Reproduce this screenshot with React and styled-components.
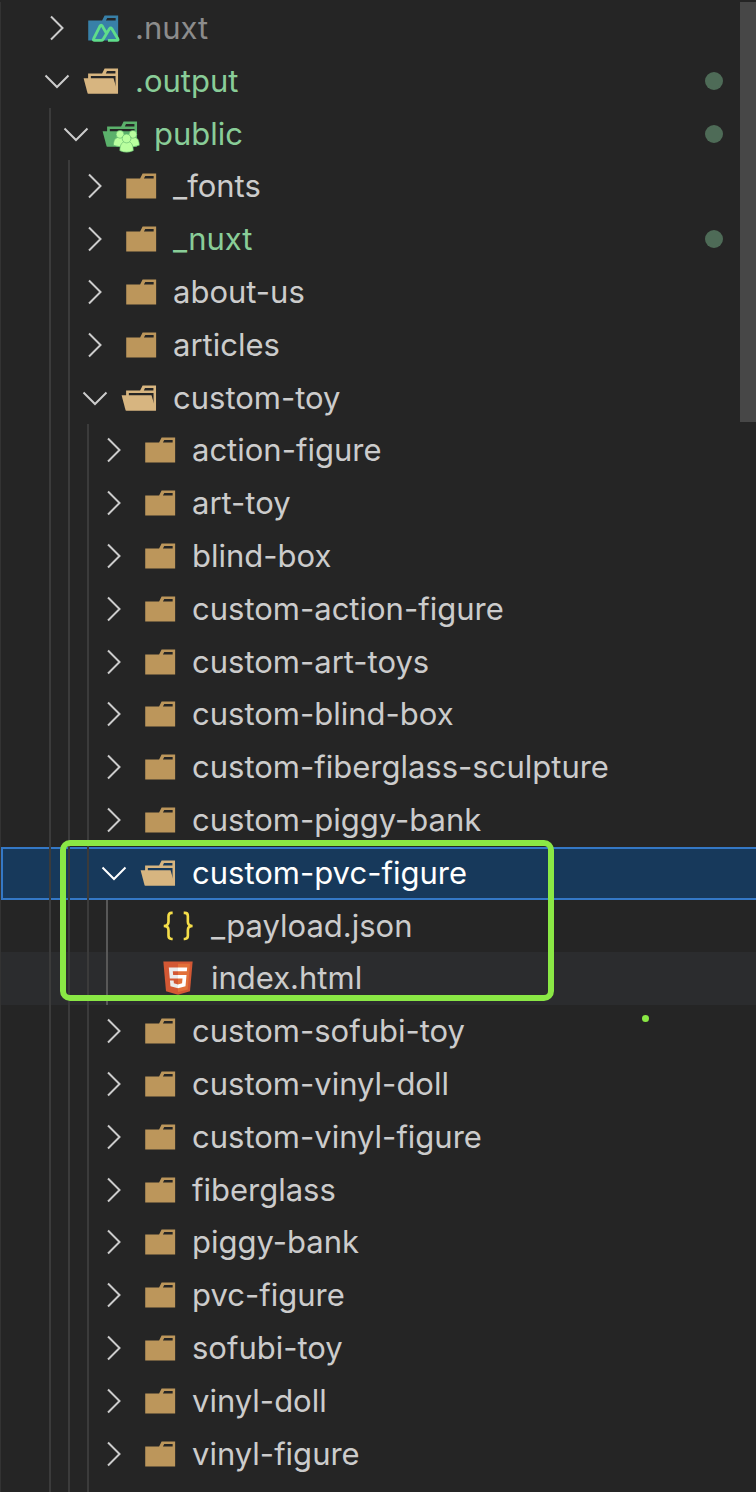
import React from 'react';
import styled, { createGlobalStyle } from 'styled-components';

const GlobalStyle = createGlobalStyle`
  body {
    margin: 0;
    background-color: #252525;
  }
`;

const Explorer = styled.main`
  display: flex;
  position: relative;
  min-height: 100vh;
  box-sizing: border-box;
  padding-top: 2px;
  overflow: hidden;
  background-color: #252525;
  font-family: Inter, 'Liberation Sans', sans-serif;
  font-size: 31px;
  line-height: 52px;
  color: #cccccc;
`;

const Panel = styled.div`
  display: flex;
  flex-direction: column;
  flex: 1;
  min-width: 0;
  margin-right: -18px;
  border-left: 1px solid #333333;
`;

const Tree = styled.ul`
  margin: 0;
  padding: 0;
  list-style: none;
`;

const Row = styled.button`
  display: flex;
  align-items: center;
  width: 100%;
  height: 53px;
  box-sizing: border-box;
  padding: 0 35px 1px 42px;
  border: 0;
  background-color: ${(props) => (props.$hovered ? '#2b2c2e' : 'transparent')};
  color: inherit;
  font: inherit;
  text-align: left;
  white-space: nowrap;
  cursor: pointer;
  li:nth-child(5n + 3) > & {
    height: 52px;
    padding-bottom: 0;
  }
  ${(props) => props.$selected && `
    background-color: #17395b;
    box-shadow: inset 0 0 0 2px #3478c6;
    color: #ffffff;
  `}
`;

const Guides = styled.span`
  display: flex;
  align-self: stretch;
  margin-bottom: -1px;
`;

const Guide = styled.span`
  width: 13px;
  margin-left: 6px;
  box-sizing: border-box;
  border-left: 2px solid ${(props) => (props.$active ? '#585858' : '#3b3b3b')};
`;

const Tail = styled.div`
  display: flex;
  flex: 1;
  padding-left: 42px;
`;

const Twistie = styled.svg`
  flex: none;
  width: 28px;
  height: 28px;
  margin-right: 12px;
  fill: none;
  stroke: currentColor;
  stroke-width: 2;
`;

const Icon = styled.svg`
  flex: none;
  width: 38px;
  height: 38px;
  margin-right: 14px;
`;

const FileRow = styled(Row)`
  ${Icon} {
    margin-left: 40px;
  }
`;

const Name = styled.span`
  flex: 1;
  color: ${(props) => props.$color || 'inherit'};
`;

const StatusDot = styled.span`
  width: 18px;
  height: 18px;
  border-radius: 50%;
  background-color: #4e6b57;
`;

const Scrollbar = styled.div`
  position: relative;
  width: 16px;
  height: 420px;
  background-color: #474747;
`;

const Highlight = styled.div`
  position: absolute;
  top: 840px;
  left: 60px;
  width: 494px;
  height: 161px;
  box-sizing: border-box;
  border: 6px solid #8ae845;
  border-radius: 10px;
  pointer-events: none;
`;

const PenDot = styled.div`
  position: absolute;
  top: 1015px;
  left: 642px;
  width: 7px;
  height: 7px;
  border-radius: 50%;
  background-color: #8ae845;
`;

const FOLDER = 'M27.5,5.5H18.2L16.1,9.7H4.4V26.5H29.6V5.5Zm0,4.2H19.3l1.1-2.1h7.1Z';
const FOLDER_OPEN = 'M27.4,5.5H18.2L16.1,9.7H4.3V26.5H29.5V5.5Zm0,18.7H6.6V11.8H27.4Zm0-14.5H19.2l1-2.1h7.1V9.7Z';
const FOLDER_FRONT = 'M25.7,13.7H.5L3.9,26.5H29.5Z';

const icons = {
  folder: <path d={FOLDER} fill="#bc965b" />,
  open: (
    <>
      <path d={FOLDER_OPEN} fill="#d7b580" />
      <path d={FOLDER_FRONT} fill="#d7b580" />
    </>
  ),
  nuxt: (
    <>
      <path d={FOLDER} fill="#3880a8" />
      <path
        d="M21 26.4H28.6Q30.1 26.400 29.300 25L24.300 16.600Q23.300 15.200 22.300 16.600L17 25.400Q16.400 26.400 15.200 26.400H9.800Q8.200 26.400 9 25L14.300 14.400Q15.300 12.800 16.300 14.400L19.600 20.200"
        fill="none"
        stroke="#5fdd8a"
        strokeWidth="2.4"
        strokeLinejoin="round"
      />
    </>
  ),
  public: (
    <>
      <path d={FOLDER_OPEN} fill="#5bb16b" />
      <path d={FOLDER_FRONT} fill="#5bb16b" />
      <g fill="#b9ff9f" stroke="#5bb16b" strokeWidth="0.5">
        <path d="M9.600 25.500c0-4 1.600-6.900 5.600-6.900s5 2.900 5 6.900q-5 2.500-10.600 0z" />
        <path d="M21 25.500c0-4 1-6.900 5-6.900s5.400 2.900 5.400 6.900q-5.200 2.500-10.400 0z" />
        <circle cx="15.200" cy="16.300" r="3.300" />
        <circle cx="26" cy="16.300" r="3.300" />
        <path d="M15 30c0-5 2-8 5.700-8s5.700 3 5.700 8q-5.700 2.600-11.400 0z" />
        <circle cx="20.700" cy="19.800" r="3.700" />
      </g>
    </>
  ),
  json: (
    <g fill="none" stroke="#f5de49" strokeWidth="2.2">
      <path d="M11.500 4.900H10.500Q8 4.900 8 7.500V12.500Q8 16 4 16Q8 16 8 19.500V24.300Q8 26.900 10.500 26.900H11.500" />
      <path d="M20.800 4.900H21.800Q24.300 4.900 24.300 7.500V12.500Q24.300 16 28.300 16Q24.300 16 24.300 19.500V24.300Q24.300 26.900 21.800 26.900H20.800" />
    </g>
  ),
  html: (
    <>
      <path d="M5.902 27.201 3.655 2H28.345L26.095 27.197 15.985 30Z" fill="#d35834" />
      <path d="M16 27.858 24.17 25.593 26.092 4.061H16Z" fill="#e27039" />
      <path d="M16 13.407H11.91L11.628 10.242H16V7.151H8.25L9.083 16.498H16ZM16 21.434 12.544 20.509 12.324 18.044H9.221L9.654 22.896 16 24.65Z" fill="#ebebeb" />
      <path d="M15.989 13.407V16.498H19.795L19.437 20.507 15.989 21.437V24.653L22.326 22.896 23.174 13.407ZM15.989 7.151V10.242H23.445L23.732 7.151Z" fill="#ffffff" />
    </>
  ),
};

const customFolders = [
  'action-figure',
  'art-toy',
  'blind-box',
  'custom-action-figure',
  'custom-art-toys',
  'custom-blind-box',
  'custom-fiberglass-sculpture',
  'custom-piggy-bank',
];

const moreFolders = [
  'custom-sofubi-toy',
  'custom-vinyl-doll',
  'custom-vinyl-figure',
  'fiberglass',
  'piggy-bank',
  'pvc-figure',
  'sofubi-toy',
  'vinyl-doll',
  'vinyl-figure',
];

const GREEN = '#89cd98';

const items = [
  { name: '.nuxt', depth: 0, icon: 'nuxt', color: '#8c8c8c' },
  { name: '.output', depth: 0, icon: 'open', open: true, color: GREEN, changed: true },
  { name: 'public', depth: 1, icon: 'public', open: true, color: GREEN, changed: true },
  { name: '_fonts', depth: 2 },
  { name: '_nuxt', depth: 2, color: GREEN, changed: true },
  { name: 'about-us', depth: 2 },
  { name: 'articles', depth: 2 },
  { name: 'custom-toy', depth: 2, icon: 'open', open: true },
  ...customFolders.map((name) => ({ name, depth: 3 })),
  { name: 'custom-pvc-figure', depth: 3, icon: 'open', open: true, selected: true },
  { name: '_payload.json', depth: 4, icon: 'json', file: true },
  { name: 'index.html', depth: 4, icon: 'html', file: true, hovered: true },
  ...moreFolders.map((name) => ({ name, depth: 3 })),
];

const IndentGuides = ({ depth }) => (
  <Guides>
    {Array.from({ length: depth }, (_, i) => (
      <Guide key={i} $active={i === 3} />
    ))}
  </Guides>
);

const TreeItem = ({ item }) => {
  const { name, depth, icon = 'folder', open, color, changed, selected, hovered, file } = item;
  const Line = file ? FileRow : Row;

  return (
    <li>
      <Line type="button" $selected={selected} $hovered={hovered} aria-expanded={file ? undefined : !!open}>
        <IndentGuides depth={depth} />
        {!file && (
          <Twistie viewBox="0 0 28 28" aria-hidden="true">
            <path d={open ? 'M2.5 8.5L14 20L25.5 8.5' : 'M8 2.5L19.5 14L8 25.5'} />
          </Twistie>
        )}
        <Icon viewBox="0 0 32 32" aria-hidden="true">{icons[icon]}</Icon>
        <Name $color={color}>{name}</Name>
        {changed && <StatusDot />}
      </Line>
    </li>
  );
};

const App = () => (
  <>
    <GlobalStyle />
    <Explorer>
      <Panel>
        <Tree>
          {items.map((item) => (
            <TreeItem key={`${item.depth}-${item.name}`} item={item} />
          ))}
        </Tree>
        <Tail>
          <IndentGuides depth={3} />
        </Tail>
      </Panel>
      <Scrollbar />
      <Highlight />
      <PenDot />
    </Explorer>
  </>
);

export default App;
